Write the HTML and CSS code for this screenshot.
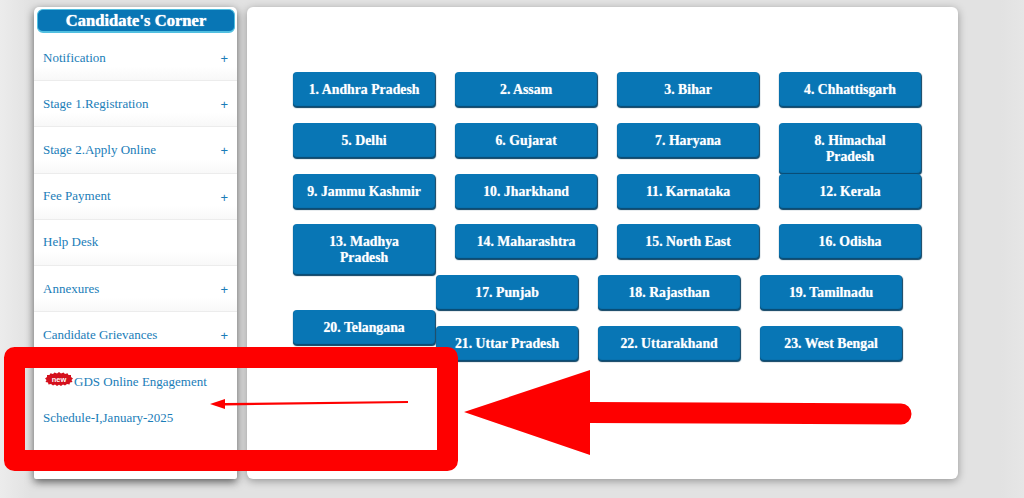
FILE: index.html
```html
<!DOCTYPE html>
<html lang="en">
<head>
<meta charset="utf-8">
<title>Candidate's Corner</title>
<link rel="stylesheet" href="styles.css">
</head>
<body>
<div class="page">
  <aside class="sidebar">
    <h2 class="corner-title">Candidate's Corner</h2>
    <div class="menu-row"><span>Notification</span><span class="plus">+</span></div>
    <div class="menu-row"><span>Stage 1.Registration</span><span class="plus">+</span></div>
    <div class="menu-row"><span>Stage 2.Apply Online</span><span class="plus">+</span></div>
    <div class="menu-row"><span>Fee Payment</span><span class="plus">+</span></div>
    <div class="menu-row"><span>Help Desk</span></div>
    <div class="menu-row"><span>Annexures</span><span class="plus">+</span></div>
    <div class="menu-row"><span>Candidate Grievances</span><span class="plus">+</span></div>
    <div class="gds">
      <div class="gds-line">
        <svg class="new-badge" viewBox="0 0 28 14" aria-hidden="false">
          <polygon fill="#d4101c" points="14,0 16,1.5 18.5,.5 20,2 22.5,1.2 23.5,3 26,3 26,5 28,6.5 26.5,8 27.5,10 25,10.5 24.5,12.5 22,12 20,13.5 18,12.5 16,14 14,12.8 12,14 10,12.5 8,13.5 6,12 3.5,12.5 3,10.5 .5,10 1.5,8 0,6.5 2,5 2,3 4.5,3 5.5,1.2 8,2 9.5,.5 12,1.5"/>
          <text x="14" y="9.6" class="new-text" text-anchor="middle">new</text>
        </svg>
        <span>GDS Online Engagement</span>
      </div>
      <div class="gds-sub">Schedule-I,January-2025</div>
    </div>
  </aside>
  <main class="panel">
    <div class="state-row">
      <a class="state">1. Andhra Pradesh</a><a class="state">2. Assam</a><a class="state">3. Bihar</a><a class="state">4. Chhattisgarh</a>
    </div>
    <div class="state-row">
      <a class="state">5. Delhi</a><a class="state">6. Gujarat</a><a class="state">7. Haryana</a><a class="state tall">8. Himachal Pradesh</a>
    </div>
    <div class="state-row">
      <a class="state">9. Jammu Kashmir</a><a class="state">10. Jharkhand</a><a class="state">11. Karnataka</a><a class="state">12. Kerala</a>
    </div>
    <div class="state-row">
      <a class="state tall">13. Madhya Pradesh</a><a class="state">14. Maharashtra</a><a class="state">15. North East</a><a class="state">16. Odisha</a>
    </div>
    <div class="state-tail">
      <div class="tail-left"><a class="state">20. Telangana</a></div>
      <div class="tail-right">
        <div class="state-row">
          <a class="state">17. Punjab</a><a class="state">18. Rajasthan</a><a class="state">19. Tamilnadu</a>
        </div>
        <div class="state-row">
          <a class="state">21. Uttar Pradesh</a><a class="state">22. Uttarakhand</a><a class="state">23. West Bengal</a>
        </div>
      </div>
    </div>
  </main>
</div>
<svg class="annotation" viewBox="0 0 1024 498" aria-hidden="true">
  <rect class="red-box" x="14.5" y="357.5" width="433" height="103"/>
  <path class="red-fill" d="M210 404 L225 399 L225 403 L408 401 L408 403 L225 405.5 L225 409 Z"/>
  <path class="red-fill" d="M464 412 L590 370 L590 402 L901 403.5 A10.5 10.5 0 0 1 901 424.5 L590 423 L590 455 Z"/>
</svg>
</body>
</html>
```
FILE: styles.css
```css
* { box-sizing: border-box; }
html, body { margin: 0; padding: 0; }
body {
  width: 1024px;
  height: 498px;
  overflow: hidden;
  position: relative;
  background: linear-gradient(90deg, #ececec 0, #e2e2e2 30px, #e2e2e2 1000px, #e6e6e6 1024px);
  font-family: "Liberation Serif", "Times New Roman", serif;
}
.page {
  display: flex;
  gap: 10px;
  padding: 7px 0 0 34px;
}
.sidebar {
  width: 203px;
  height: 472px;
  background: #fff;
  border-radius: 5px 5px 2px 2px;
  box-shadow: 0 3px 9px rgba(0, 0, 0, .6);
  display: flex;
  flex-direction: column;
}
.corner-title {
  margin: 2px 2px 2px 3px;
  height: 24px;
  flex: none;
  background: #0876b5;
  border: 1px solid #52bfe0;
  border-bottom-width: 2px;
  border-radius: 6px;
  color: #fff;
  font-size: 16.6px;
  line-height: 21px;
  font-weight: bold;
  text-align: center;
  text-shadow: 0 0 1px #fff;
}
.menu-row {
  height: 46.2px;
  flex: none;
  padding: 0 9px;
  display: flex;
  justify-content: space-between;
  align-items: center;
  color: #1a7db8;
  font-size: 13px;
  background: linear-gradient(#fff 0, #fff 70%, #f8f8f8 100%);
  border-bottom: 1px solid #ececec;
}
.plus {
  font-family: "Liberation Sans", Arial, sans-serif;
  font-size: 13px;
  color: #1a7db8;
  margin-top: 2px;
}
.gds {
  padding: 14px 9px 0;
  color: #1a7db8;
  font-size: 13px;
}
.gds-line {
  display: flex;
  align-items: center;
  height: 20px;
}
.new-badge {
  width: 28px;
  height: 14px;
  margin: -7px 1px 0 2px;
  flex: none;
}
.new-text {
  fill: #fff;
  font-family: "Liberation Sans", Arial, sans-serif;
  font-size: 7.5px;
  font-weight: bold;
}
.gds-sub {
  margin-top: 18px;
}
.panel {
  width: 711px;
  height: 472px;
  background: #fff;
  border-radius: 6px;
  box-shadow: 0 2px 8px rgba(0, 0, 0, .35);
  padding: 65px 0 0 46px;
}
.state-row {
  display: flex;
  gap: 19.8px;
  height: 50.8px;
  align-items: flex-start;
}
.state {
  display: block;
  flex: none;
  width: 142.2px;
  min-height: 35px;
  padding: 10px 12px 0;
  background: #0876b5;
  border-radius: 4px;
  box-shadow: inset 0 -1px 1px #0a4a70, 0.5px 1px 1px #0a3f5f;
  color: #fff;
  font-size: 13.8px;
  line-height: 16px;
  font-weight: bold;
  text-align: center;
  text-shadow: 0 0 1px rgba(255, 255, 255, .6);
}
.tall {
  min-height: 51px;
}
.state-tail {
  display: flex;
}
.tail-left {
  width: 143px;
  padding-top: 35px;
}
.tail-right {
  display: flex;
  flex-direction: column;
}
.annotation {
  position: absolute;
  left: 0;
  top: 0;
  width: 1024px;
  height: 498px;
}
.red-box {
  fill: none;
  stroke: #fe0000;
  stroke-width: 21;
  stroke-linejoin: round;
}
.red-fill {
  fill: #fe0000;
}
```
